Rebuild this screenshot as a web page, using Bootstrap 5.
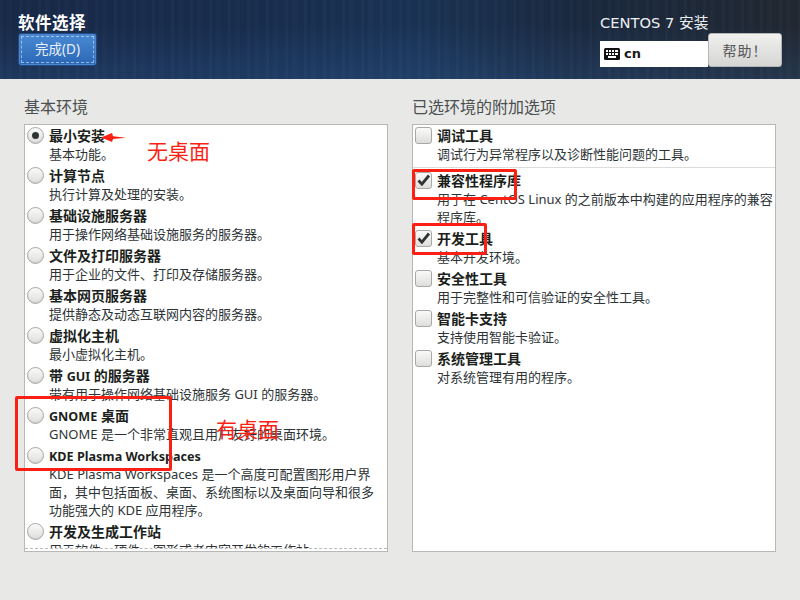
<!DOCTYPE html>
<html lang="zh-CN">
<head>
<meta charset="utf-8">
<title>软件选择</title>
<link rel="stylesheet" href="https://cdn.jsdelivr.net/npm/bootstrap@5.3.0/dist/css/bootstrap.min.css">
<style>
html,body{height:100%}
body{width:800px;height:600px;overflow:hidden;background:#e8e8e6;color:#2e3436;font-family:"Noto Sans","Noto Sans CJK SC",sans-serif;position:relative}
.top-bar{height:79px;padding:13px 18px 0 18px;background:
 repeating-linear-gradient(90deg,rgba(255,255,255,.018) 0 3px,rgba(0,0,0,.02) 3px 7px,rgba(255,255,255,.01) 7px 12px,rgba(0,0,0,.015) 12px 19px),
 linear-gradient(0deg,rgba(40,80,130,.28),rgba(0,0,0,.12) 70%),
 linear-gradient(90deg,#1b2f52 0,#1b3358 30%,#1d3a60 52%,#1e2f48 72%,#252d38 100%)}
.spoke-title{font-size:16.5px;font-weight:700;color:#fff;line-height:19px;letter-spacing:.5px;margin-bottom:1px}
.done-btn{width:79px;height:33px;padding:0;font-size:13.5px;color:#e8f0fa;border:1px solid #1d4a85;border-radius:3px;background:linear-gradient(#4a8ad4,#2a66b4);position:relative;box-shadow:inset 0 0 0 1px #4d86cc}
.done-btn::after{content:"";position:absolute;inset:2px;border:1px dashed rgba(210,228,250,.65)}
.right-head{width:182px}
.product{font-size:14.7px;line-height:19px;color:#eceff2;margin-bottom:9px;font-family:"DejaVu Sans","Noto Sans CJK SC",sans-serif}
.kbd-wrap{width:108px;height:26px;background:#fff;color:#1a1a1a;font-size:13px;font-weight:700;padding-left:4px;gap:4px;font-family:"DejaVu Sans",sans-serif}
.help-btn{width:74px;height:34px;margin-top:-8px;padding:0;font-size:14px;color:#555;border:1px solid #b5b5b3;border-radius:3px;background:linear-gradient(#f0f0ef,#d5d5d3);letter-spacing:1px}
.work-area{padding:17px 24px 0 24px;gap:24px}
.col-pane{width:364px}
.pane-title{font-size:16px;line-height:23px;color:#4a4f50;margin-bottom:5px}
.pane-box{height:428px;background:#fff;border:1px solid #b8b8b6;overflow:hidden;position:relative;padding:1px 0 0 2px}
.pane-box.lower-fade::after{content:"";position:absolute;left:0;right:0;bottom:0;height:3px;background:#fff;border-top:1px dashed #bbb}
.opt-row{display:flex;padding-bottom:3px}
.opt-mark{width:22px;flex:none;padding:1px 0 0 0}
.opt-text{flex:1;padding-right:1px}
.opt-name{font-size:14px;font-weight:700;line-height:20px;height:20px;color:#1c1f20}
.latin-cut{font-size:12.6px;line-height:1}
.opt-desc{font-size:13px;line-height:18px;color:#2e3436;margin-top:-1px}
.sep-line{height:1px;background:#dcdcda;margin:1px 0 3px -2px}
.radio-mark{display:block;width:17px;height:17px;border-radius:50%;border:1px solid #a8a8a6;background:linear-gradient(#fafafa,#dededc);box-shadow:inset 0 -1px 1px rgba(0,0,0,.08);position:relative}
.radio-mark.on::after{content:"";position:absolute;left:4px;top:4px;width:7px;height:7px;border-radius:50%;background:#2e3436}
.check-mark{display:block;width:17px;height:17px;border-radius:3px;border:1px solid #a8a8a6;background:linear-gradient(#fafafa,#dededc);position:relative}
.check-mark svg{position:absolute;left:0;top:0}
.note-box{position:absolute;border:3px solid #fb1f14;border-radius:2px}
.note-txt{position:absolute;color:#fb1f14;font-family:"Noto Sans CJK SC",sans-serif;font-size:21px;line-height:26px;white-space:nowrap}
</style>
</head>
<body>
<header class="top-bar d-flex justify-content-between">
  <div>
    <div class="spoke-title">软件选择</div>
    <button class="btn done-btn" type="button">完成(D)</button>
  </div>
  <div class="right-head">
    <div class="product">CENTOS 7 安装</div>
    <div class="d-flex align-items-start">
      <div class="kbd-wrap d-flex align-items-center flex-shrink-0">
        <svg width="16" height="12" viewBox="0 0 16 12"><rect width="16" height="12" rx="1.5" fill="#111"/><g fill="#fff"><rect x="2" y="2" width="2" height="2"/><rect x="5" y="2" width="2" height="2"/><rect x="8" y="2" width="2" height="2"/><rect x="11" y="2" width="3" height="2"/><rect x="2" y="5" width="2" height="2"/><rect x="5" y="5" width="2" height="2"/><rect x="8" y="5" width="2" height="2"/><rect x="11" y="5" width="3" height="2"/><rect x="4" y="8" width="8" height="2"/></g></svg>
        <span>cn</span>
      </div>
      <button class="btn help-btn flex-shrink-0" type="button">帮助！</button>
    </div>
  </div>
</header>

<main class="work-area d-flex">
  <section class="col-pane">
    <div class="pane-title">基本环境</div>
    <div class="pane-box lower-fade">
      <div class="opt-row"><div class="opt-mark"><span class="radio-mark on"></span></div><div class="opt-text"><div class="opt-name">最小安装</div><div class="opt-desc">基本功能。</div></div></div>
      <div class="opt-row"><div class="opt-mark"><span class="radio-mark"></span></div><div class="opt-text"><div class="opt-name">计算节点</div><div class="opt-desc">执行计算及处理的安装。</div></div></div>
      <div class="opt-row"><div class="opt-mark"><span class="radio-mark"></span></div><div class="opt-text"><div class="opt-name">基础设施服务器</div><div class="opt-desc">用于操作网络基础设施服务的服务器。</div></div></div>
      <div class="opt-row"><div class="opt-mark"><span class="radio-mark"></span></div><div class="opt-text"><div class="opt-name">文件及打印服务器</div><div class="opt-desc">用于企业的文件、打印及存储服务器。</div></div></div>
      <div class="opt-row"><div class="opt-mark"><span class="radio-mark"></span></div><div class="opt-text"><div class="opt-name">基本网页服务器</div><div class="opt-desc">提供静态及动态互联网内容的服务器。</div></div></div>
      <div class="opt-row"><div class="opt-mark"><span class="radio-mark"></span></div><div class="opt-text"><div class="opt-name">虚拟化主机</div><div class="opt-desc">最小虚拟化主机。</div></div></div>
      <div class="opt-row"><div class="opt-mark"><span class="radio-mark"></span></div><div class="opt-text"><div class="opt-name">带 <span class="latin-cut">GUI</span> 的服务器</div><div class="opt-desc">带有用于操作网络基础设施服务 GUI 的服务器。</div></div></div>
      <div class="opt-row"><div class="opt-mark"><span class="radio-mark"></span></div><div class="opt-text"><div class="opt-name"><span class="latin-cut">GNOME</span> 桌面</div><div class="opt-desc">GNOME 是一个非常直观且用户友好的桌面环境。</div></div></div>
      <div class="opt-row"><div class="opt-mark"><span class="radio-mark"></span></div><div class="opt-text"><div class="opt-name"><span class="latin-cut">KDE Plasma Workspaces</span></div><div class="opt-desc">KDE Plasma Workspaces 是一个高度可配置图形用户界面，其中包括面板、桌面、系统图标以及桌面向导和很多功能强大的 KDE 应用程序。</div></div></div>
      <div class="opt-row"><div class="opt-mark"><span class="radio-mark"></span></div><div class="opt-text"><div class="opt-name">开发及生成工作站</div><div class="opt-desc">用于软件、硬件、图形或者内容开发的工作站。</div></div></div>
    </div>
  </section>
  <section class="col-pane">
    <div class="pane-title">已选环境的附加选项</div>
    <div class="pane-box">
      <div class="opt-row"><div class="opt-mark"><span class="check-mark"></span></div><div class="opt-text"><div class="opt-name">调试工具</div><div class="opt-desc">调试行为异常程序以及诊断性能问题的工具。</div></div></div>
      <div class="sep-line"></div>
      <div class="opt-row"><div class="opt-mark"><span class="check-mark"><svg width="15" height="15" viewBox="0 0 15 15"><path d="M2.5 7.5l3.4 3.6L13 2.5" fill="none" stroke="#2e3436" stroke-width="2.8"/></svg></span></div><div class="opt-text"><div class="opt-name">兼容性程序库</div><div class="opt-desc">用于在 CentOS Linux 的之前版本中构建的应用程序的兼容程序库。</div></div></div>
      <div class="opt-row"><div class="opt-mark"><span class="check-mark"><svg width="15" height="15" viewBox="0 0 15 15"><path d="M2.5 7.5l3.4 3.6L13 2.5" fill="none" stroke="#2e3436" stroke-width="2.8"/></svg></span></div><div class="opt-text"><div class="opt-name">开发工具</div><div class="opt-desc">基本开发环境。</div></div></div>
      <div class="opt-row"><div class="opt-mark"><span class="check-mark"></span></div><div class="opt-text"><div class="opt-name">安全性工具</div><div class="opt-desc">用于完整性和可信验证的安全性工具。</div></div></div>
      <div class="opt-row"><div class="opt-mark"><span class="check-mark"></span></div><div class="opt-text"><div class="opt-name">智能卡支持</div><div class="opt-desc">支持使用智能卡验证。</div></div></div>
      <div class="opt-row"><div class="opt-mark"><span class="check-mark"></span></div><div class="opt-text"><div class="opt-name">系统管理工具</div><div class="opt-desc">对系统管理有用的程序。</div></div></div>
    </div>
  </section>
</main>

<svg class="position-absolute" style="left:100px;top:132px" width="28" height="12" viewBox="0 0 28 12"><path d="M1 5.5L12 1l1 3.2L26 5.7l-13 1.2L12 10z" fill="#fb1f14"/></svg>
<span class="note-txt" style="left:147px;top:137px">无桌面</span>
<span class="note-txt" style="left:216px;top:415px">有桌面</span>
<div class="note-box" style="left:15px;top:396px;width:157px;height:75px"></div>
<div class="note-box" style="left:412px;top:169px;width:105px;height:31px"></div>
<div class="note-box" style="left:412px;top:223px;width:75px;height:32px"></div>
<script src="https://cdn.jsdelivr.net/npm/bootstrap@5.3.0/dist/js/bootstrap.bundle.min.js"></script>
</body>
</html>
